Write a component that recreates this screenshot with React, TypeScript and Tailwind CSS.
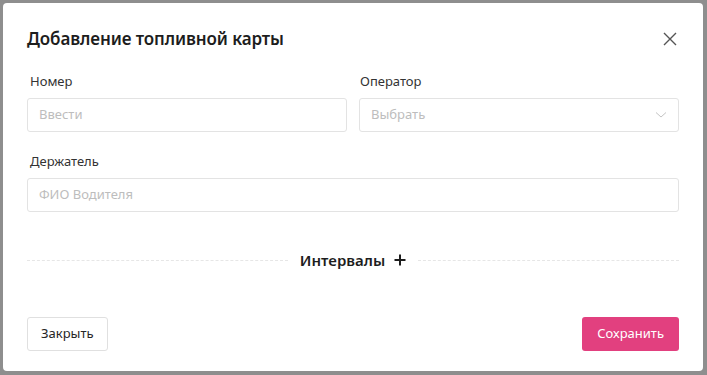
import React from "react";

export default function App() {
  const font = { fontFamily: '"Noto Sans", "Open Sans", sans-serif' };
  return (
    <div
      className="w-[707px] h-[375px] bg-[#8e8e8e] pt-[3px] pl-[3px] overflow-hidden"
      style={font}
    >
      <div className="w-[700px] h-[368px] bg-white rounded-[4px] flex flex-col px-[24px]">
        <div className="flex items-center justify-between h-[70px] pt-[2px]">
          <h1 className="text-[17px] font-semibold text-[#1d1d1d] tracking-[-0.1px]">
            Добавление топливной карты
          </h1>
          <svg width="14" height="14" viewBox="0 0 14 14" className="mr-[2px]">
            <path d="M1 1 L13 13 M13 1 L1 13" stroke="#555" strokeWidth="1.4" fill="none" />
          </svg>
        </div>
        <div className="grid grid-cols-2 gap-x-[12px]">
          <div className="flex flex-col">
            <label className="text-[13px] font-normal text-[#333] pl-[3px] h-[25px] leading-[16px]">Номер</label>
            <div className="h-[34px] border border-[#e3e3e3] rounded-[3px] flex items-center px-[11px] text-[13px] text-[#bdbdbd]">
              Ввести
            </div>
          </div>
          <div className="flex flex-col">
            <label className="text-[13px] font-normal text-[#333] pl-[1px] h-[25px] leading-[16px]">Оператор</label>
            <div className="h-[34px] border border-[#e3e3e3] rounded-[3px] flex items-center justify-between px-[11px] text-[13px] text-[#bdbdbd]">
              <span>Выбрать</span>
              <svg width="12" height="8" viewBox="0 0 12 8">
                <path d="M1 1.5 L6 6 L11 1.5" stroke="#c4c4c4" strokeWidth="1" fill="none" />
              </svg>
            </div>
          </div>
        </div>
        <div className="flex flex-col mt-[21px]">
          <label className="text-[13px] font-normal text-[#333] pl-[3px] h-[25px] leading-[16px]">Держатель</label>
          <div className="h-[34px] border border-[#e3e3e3] rounded-[3px] flex items-center px-[11px] text-[13px] text-[#bdbdbd]">
            ФИО Водителя
          </div>
        </div>
        <div className="flex items-center mt-[37px] h-[22px]">
          <div className="flex-1 border-t border-dashed border-[#e6e6e6]" />
          <div className="flex items-center gap-[9px] px-[12px] text-[15px] font-semibold text-[#1d1d1d]">
            <span>Интервалы</span>
            <svg width="12" height="12" viewBox="0 0 12 12">
              <path d="M6 0.5 V11.5 M0.5 6 H11.5" stroke="#1d1d1d" strokeWidth="2" fill="none" />
            </svg>
          </div>
          <div className="flex-1 border-t border-dashed border-[#e6e6e6]" />
        </div>
        <div className="flex items-center justify-between mt-[46px]">
          <button className="h-[34px] px-[13px] border border-[#e0e0e0] rounded-[3px] bg-white text-[13px] text-[#262626]">
            Закрыть
          </button>
          <button className="h-[34px] px-[15px] rounded-[3px] bg-[#e2407f] text-[13px] text-white">
            Сохранить
          </button>
        </div>
      </div>
    </div>
  );
}
